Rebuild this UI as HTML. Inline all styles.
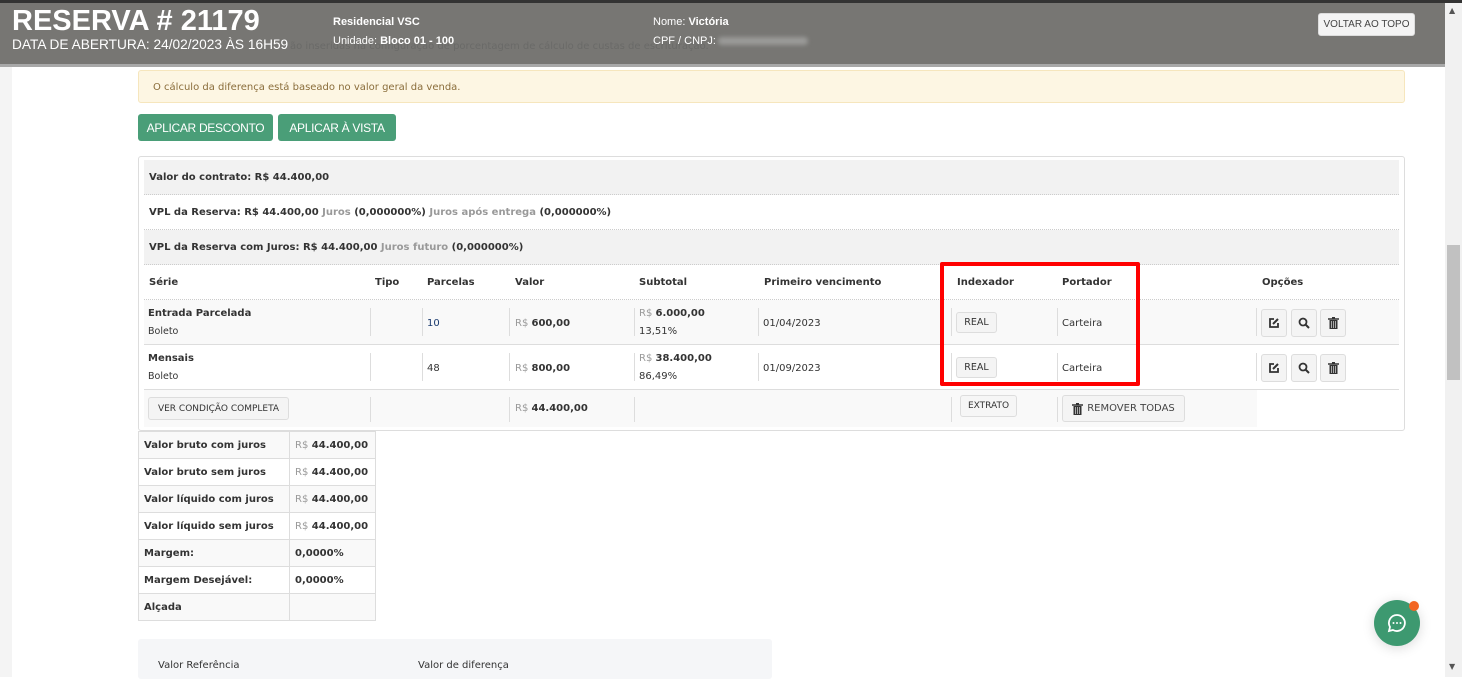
<!DOCTYPE html>
<html><head><meta charset="utf-8">
<style>
*{box-sizing:border-box;margin:0;padding:0}
body{width:1462px;height:677px;overflow:hidden;background:#fff;font-family:"DejaVu Sans","Liberation Sans",sans-serif;font-size:10px;color:#333;position:relative}
.a{position:absolute;white-space:nowrap}
.b{font-weight:bold}
.g{color:#999}
.btn{position:absolute;background:#f4f4f4;border:1px solid #ddd;border-radius:3px;font-size:9.5px;color:#333;display:flex;align-items:center;justify-content:center;white-space:nowrap}
.sep{position:absolute;width:1px;background:#ddd}
.gbtn{position:absolute;background:#4a9e78;color:#fff;border-radius:3px;font-family:"Liberation Sans",sans-serif;font-size:12px;letter-spacing:-0.3px;display:flex;align-items:center;justify-content:center;top:114px;height:27px}
.row{position:absolute;left:144px;width:1255px}
.dot{border-bottom:1px dotted #ccc}
.st td{border:1px solid #ddd;height:27px;padding:0 5px;font-weight:bold;font-size:10px;white-space:nowrap}
.m{margin-top:1px}
</style></head><body>
<div class="a" style="left:0;top:0;width:12px;height:677px;background:#f4f4f4"></div>
<div class="a" style="left:1445px;top:0;width:17px;height:677px;background:#f1f1f1"></div>
<div class="a" style="left:1447px;top:245px;width:13px;height:135px;background:#c1c1c1"></div>
<div class="a" style="left:1449px;top:6px;font-size:8px;color:#555">▲</div>
<div class="a" style="left:1449px;top:662px;font-size:8px;color:#555">▼</div>

<div class="a" style="left:138px;top:70px;width:1267px;height:33px;background:#fdf6e3;border:1px solid #f6e6bd;border-radius:3px;color:#8a6d3b;font-size:10px;padding:11px 14px">O cálculo da diferença está baseado no valor geral da venda.</div>
<div class="gbtn" style="left:138px;width:135px">APLICAR DESCONTO</div>
<div class="gbtn" style="left:278px;width:118px">APLICAR À VISTA</div>

<div class="a" style="left:138px;top:156px;width:1267px;height:275px;border:1px solid #ddd;border-radius:3px"></div>
<div class="row dot" style="top:160px;height:35px;background:#f2f2f2;padding:12px 5px"><span class="b">Valor do contrato: R$ 44.400,00</span></div>
<div class="row dot" style="top:195px;height:35px;padding:12px 5px"><span class="b">VPL da Reserva: R$ 44.400,00 <span class="g">Juros</span> (0,000000%) <span class="g">Juros após entrega</span> (0,000000%)</span></div>
<div class="row dot" style="top:230px;height:35px;background:#f2f2f2;padding:12px 5px"><span class="b">VPL da Reserva com Juros: R$ 44.400,00 <span class="g">Juros futuro</span> (0,000000%)</span></div>
<div class="row dot" style="top:265px;height:35px"></div>
<div class="a b" style="top:277px;left:149px">Série</div>
<div class="a b" style="top:277px;left:375px">Tipo</div>
<div class="a b" style="top:277px;left:427px">Parcelas</div>
<div class="a b" style="top:277px;left:515px">Valor</div>
<div class="a b" style="top:277px;left:639px">Subtotal</div>
<div class="a b" style="top:277px;left:764px">Primeiro vencimento</div>
<div class="a b" style="top:277px;left:957px">Indexador</div>
<div class="a b" style="top:277px;left:1062px">Portador</div>
<div class="a b" style="top:277px;left:1262px">Opções</div>

<div class="row" style="top:300px;height:45px;background:#f9f9f9;border-bottom:1px solid #ddd"></div>
<div class="row" style="top:345px;height:45px;border-bottom:1px solid #ddd"></div>
<div class="a" style="top:390px;left:144px;width:1113px;height:37px;background:#f9f9f9"></div>

<div class="a b" style="top:308px;left:148px">Entrada Parcelada</div>
<div class="a" style="top:326px;left:148px;font-size:9.5px">Boleto</div>
<div class="a" style="top:318px;left:427px;color:#1a3a6e">10</div>
<div class="a" style="top:318px;left:515px"><span class="g">R$</span> <b>600,00</b></div>
<div class="a" style="top:308px;left:639px"><span class="g">R$</span> <b>6.000,00</b></div>
<div class="a" style="top:326px;left:639px">13,51%</div>
<div class="a" style="top:318px;left:763px">01/04/2023</div>
<div class="btn" style="top:312px;left:956px;width:41px;height:21px">REAL</div>
<div class="a" style="top:318px;left:1062px">Carteira</div>
<div class="a b" style="top:353px;left:148px">Mensais</div>
<div class="a" style="top:371px;left:148px;font-size:9.5px">Boleto</div>
<div class="a" style="top:363px;left:427px">48</div>
<div class="a" style="top:363px;left:515px"><span class="g">R$</span> <b>800,00</b></div>
<div class="a" style="top:353px;left:639px"><span class="g">R$</span> <b>38.400,00</b></div>
<div class="a" style="top:371px;left:639px">86,49%</div>
<div class="a" style="top:363px;left:763px">01/09/2023</div>
<div class="btn" style="top:357px;left:956px;width:41px;height:21px">REAL</div>
<div class="a" style="top:363px;left:1062px">Carteira</div>
<div class="btn" style="top:397px;left:148px;width:141px;height:23px;font-size:9px">VER CONDIÇÃO COMPLETA</div>
<div class="a" style="top:403px;left:515px"><span class="g">R$</span> <b>44.400,00</b></div>
<div class="btn" style="top:395px;left:960px;width:57px;height:22px;background:#f6f6f6;font-size:9px">EXTRATO</div>
<div class="btn" style="top:395px;left:1062px;width:123px;height:27px;font-size:10px;color:#444"><svg width="11" height="12" viewBox="0 0 11 12" style="margin-right:4px"><path d="M0 2h11M4 0.7h3" stroke="#333" stroke-width="1.5"/><rect x="1.5" y="3" width="8" height="9" fill="#333"/><path d="M3.5 4v7M5.5 4v7M7.5 4v7" stroke="#ddd" stroke-width=".7"/></svg>REMOVER TODAS</div>

<div class="sep" style="left:370px;top:308px;height:28px"></div><div class="sep" style="left:422px;top:308px;height:28px"></div><div class="sep" style="left:509px;top:308px;height:28px"></div><div class="sep" style="left:634px;top:308px;height:28px"></div><div class="sep" style="left:758px;top:308px;height:28px"></div><div class="sep" style="left:951px;top:308px;height:28px"></div><div class="sep" style="left:1057px;top:308px;height:28px"></div><div class="sep" style="left:1256px;top:308px;height:28px"></div>
<div class="sep" style="left:370px;top:353px;height:28px"></div><div class="sep" style="left:422px;top:353px;height:28px"></div><div class="sep" style="left:509px;top:353px;height:28px"></div><div class="sep" style="left:634px;top:353px;height:28px"></div><div class="sep" style="left:758px;top:353px;height:28px"></div><div class="sep" style="left:951px;top:353px;height:28px"></div><div class="sep" style="left:1057px;top:353px;height:28px"></div><div class="sep" style="left:1256px;top:353px;height:28px"></div>
<div class="sep" style="left:370px;top:397px;height:25px"></div><div class="sep" style="left:509px;top:397px;height:25px"></div><div class="sep" style="left:634px;top:397px;height:25px"></div><div class="sep" style="left:951px;top:397px;height:25px"></div><div class="sep" style="left:1057px;top:397px;height:25px"></div>

<div class="btn" style="top:309px;left:1261px;width:26px;height:28px"><svg width="12" height="12" viewBox="0 0 12 12"><path d="M6 2H2v8h8V6" fill="none" stroke="#333" stroke-width="1.8"/><path d="M5 7l5-5" stroke="#333" stroke-width="2"/></svg></div>
<div class="btn" style="top:309px;left:1291px;width:26px;height:28px"><svg width="12" height="12" viewBox="0 0 12 12"><circle cx="5" cy="5" r="3.5" fill="none" stroke="#333" stroke-width="1.8"/><path d="M7.5 7.5L11 11" stroke="#333" stroke-width="2"/></svg></div>
<div class="btn" style="top:309px;left:1320px;width:26px;height:28px"><svg width="11" height="12" viewBox="0 0 11 12"><path d="M0 2h11M4 0.7h3" stroke="#333" stroke-width="1.5"/><rect x="1.5" y="3" width="8" height="9" fill="#333"/><path d="M3.5 4v7M5.5 4v7M7.5 4v7" stroke="#ddd" stroke-width=".7"/></svg></div>
<div class="btn" style="top:354px;left:1261px;width:26px;height:28px"><svg width="12" height="12" viewBox="0 0 12 12"><path d="M6 2H2v8h8V6" fill="none" stroke="#333" stroke-width="1.8"/><path d="M5 7l5-5" stroke="#333" stroke-width="2"/></svg></div>
<div class="btn" style="top:354px;left:1291px;width:26px;height:28px"><svg width="12" height="12" viewBox="0 0 12 12"><circle cx="5" cy="5" r="3.5" fill="none" stroke="#333" stroke-width="1.8"/><path d="M7.5 7.5L11 11" stroke="#333" stroke-width="2"/></svg></div>
<div class="btn" style="top:354px;left:1320px;width:26px;height:28px"><svg width="11" height="12" viewBox="0 0 11 12"><path d="M0 2h11M4 0.7h3" stroke="#333" stroke-width="1.5"/><rect x="1.5" y="3" width="8" height="9" fill="#333"/><path d="M3.5 4v7M5.5 4v7M7.5 4v7" stroke="#ddd" stroke-width=".7"/></svg></div>

<div class="a" style="left:940px;top:262px;width:200px;height:124px;border:4px solid #f00;border-radius:2px"></div>

<table class="a st" style="left:138px;top:431px;border-collapse:collapse;width:237px;table-layout:fixed">
<colgroup><col style="width:151px"><col style="width:86px"></colgroup>
<tr style="background:#f9f9f9"><td>Valor bruto com juros</td><td><span class="g" style="font-weight:normal">R$</span> 44.400,00</td></tr>
<tr><td>Valor bruto sem juros</td><td><span class="g" style="font-weight:normal">R$</span> 44.400,00</td></tr>
<tr style="background:#f9f9f9"><td>Valor líquido com juros</td><td><span class="g" style="font-weight:normal">R$</span> 44.400,00</td></tr>
<tr><td>Valor líquido sem juros</td><td><span class="g" style="font-weight:normal">R$</span> 44.400,00</td></tr>
<tr style="background:#f9f9f9"><td>Margem:</td><td>0,0000%</td></tr>
<tr><td>Margem Desejável:</td><td>0,0000%</td></tr>
<tr style="background:#f9f9f9"><td>Alçada</td><td></td></tr>
</table>

<div class="a" style="left:138px;top:639px;width:634px;height:40px;background:#f5f6f8;border-radius:3px"></div>
<div class="a" style="left:158px;top:660px;font-size:10px">Valor Referência</div>
<div class="a" style="left:418px;top:660px;font-size:10px">Valor de diferença</div>

<div class="a" style="left:1374px;top:600px;width:46px;height:46px;border-radius:50%;background:#3d9970;box-shadow:0 2px 12px rgba(0,0,0,.15)"></div>
<svg class="a" style="left:1386px;top:612px" width="22" height="22" viewBox="0 0 22 22"><path d="M11 3a8 8 0 1 1-4 15l-4 1 1-4A8 8 0 0 1 11 3z" fill="none" stroke="#fff" stroke-width="1.8"/><circle cx="7.5" cy="11" r="1" fill="#fff"/><circle cx="11" cy="11" r="1" fill="#fff"/><circle cx="14.5" cy="11" r="1" fill="#fff"/></svg>
<div class="a" style="left:1409px;top:601px;width:10px;height:10px;border-radius:50%;background:#f26522"></div>

<div class="a" style="left:0;top:0;width:1462px;height:3px;background:#333"></div>
<div class="a" style="left:0;top:3px;width:1445px;height:61px;background:#777673"></div>
<div class="a" style="left:0;top:64px;width:1445px;height:3px;background:#a8a8a8"></div>
<div class="a" style="left:290px;top:41px;font-size:10px;color:#6a6a68">ão inseridas na configuração de porcentagem de cálculo de custas de escrituração.</div>
<div class="a b" style="left:12px;top:5px;font-family:'Liberation Sans',sans-serif;font-size:29px;color:#fff">RESERVA # 21179</div>
<div class="a" style="left:12px;top:37px;font-family:'Liberation Sans',sans-serif;font-size:13.7px;color:#fff">DATA DE ABERTURA: 24/02/2023 ÀS 16H59</div>
<div class="a b" style="left:333px;top:16px;font-family:'Liberation Sans',sans-serif;font-size:11px;color:#fff">Residencial VSC</div>
<div class="a" style="left:333px;top:35px;font-family:'Liberation Sans',sans-serif;font-size:11px;color:#fff">Unidade: <b>Bloco 01 - 100</b></div>
<div class="a" style="left:653px;top:16px;font-family:'Liberation Sans',sans-serif;font-size:11px;color:#fff">Nome: <b>Victória</b></div>
<div class="a" style="left:653px;top:35px;font-family:'Liberation Sans',sans-serif;font-size:11px;color:#fff">CPF / CNPJ:</div>
<div class="a" style="left:718px;top:37px;width:90px;height:8px;background:#9a9a98;border-radius:4px;filter:blur(2px)"></div>
<div class="btn" style="left:1318px;top:13px;width:97px;height:23px;font-family:'Liberation Sans',sans-serif;color:#444;font-size:10px">VOLTAR AO TOPO</div>
</body></html>
